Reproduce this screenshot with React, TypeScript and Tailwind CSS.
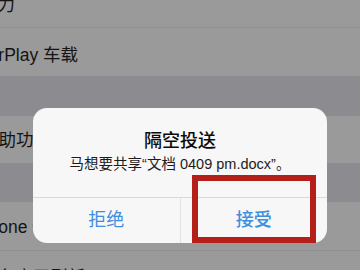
import React from "react";

const font = "font-['Liberation_Sans','Noto_Sans_CJK_SC',sans-serif]";

const Row = ({ text, className = "", offset = "-ml-[20px]" }: { text: string; className?: string; offset?: string }) => (
  <div className={`flex items-center bg-[#9a9a9a] ${className}`}>
    <span className={`${offset} whitespace-nowrap text-[17.5px] text-[#141414]`}>{text}</span>
  </div>
);

const AirDropAlert = () => (
  <div className="absolute left-[33px] top-[108px] flex h-[135px] w-[294px] flex-col rounded-[14px] bg-[#f7f7f7]">
    <div className="flex flex-col items-center px-3 pt-[22px] pb-[23px]">
      <p className="text-[18px] leading-[22px] font-medium text-[#0a0a0a]">隔空投送</p>
      <p className="mt-[2px] whitespace-nowrap text-[14.5px] leading-[20px] text-[#1c1c1c]">
        马想要共享“文档 0409 pm.docx”。
      </p>
    </div>
    <div className="flex flex-1 border-t border-[#dadada]">
      <button className="flex flex-1 items-center justify-center text-[18px] text-[#3d8fe0]">拒绝</button>
      <div className="w-px bg-[#e2e2e2]" />
      <button className="flex flex-1 items-center justify-center text-[18px] font-medium text-[#3d8fe0]">
        接受
      </button>
    </div>
  </div>
);

export default function App() {
  return (
    <div className={`relative h-[270px] w-[360px] overflow-hidden bg-[#8b8b90] ${font}`}>
      <div className="flex flex-col">
        <Row text="接力" className="-mt-[16px] h-[44px] border-b border-[#8f8f8f]" />
        <Row text="CarPlay 车载" offset="-ml-[24px]" className="h-[48px] pt-[6px]" />
        <div className="h-[40px]" />
        <Row text="辅助功能" offset="-ml-[19px]" className="h-[47px] pt-[2px]" />
        <div className="h-[39px]" />
        <Row text="iPhone 储存空间" offset="-ml-[27px]" className="h-[49px] pt-[2px] border-b border-[#8f8f8f]" />
        <Row text="后台应用刷新" className="h-[48px] pt-[4px]" />
      </div>
      <AirDropAlert />
      <div className="pointer-events-none absolute left-[192px] top-[175px] h-[68px] w-[124px] border-[6px] border-[#b51f1a]" />
    </div>
  );
}
